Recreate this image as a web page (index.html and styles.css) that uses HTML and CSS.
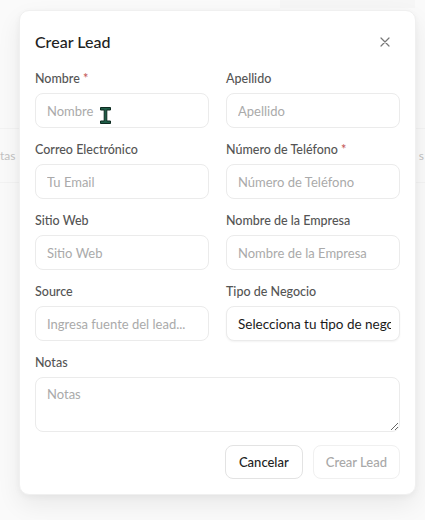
FILE: index.html
```html
<!DOCTYPE html>
<html lang="es">
<head>
<meta charset="utf-8">
<title>Crear Lead</title>
<link rel="stylesheet" href="styles.css">
</head>
<body>
<div class="page">
  <div class="topbar"></div>
  <div class="tabs">
    <span class="tab">tas</span>
    <span class="tab">s</span>
  </div>
</div>
<div class="backdrop"></div>
<div class="modal" role="dialog">
  <div class="modal-header">
    <h2 class="modal-title">Crear Lead</h2>
    <button class="close" aria-label="Cerrar">
      <svg width="10" height="10" viewBox="0 0 10 10"><path d="M1 1L9 9M9 1L1 9" stroke="#777" stroke-width="1.2" fill="none" stroke-linecap="round"/></svg>
    </button>
  </div>
  <form class="form">
    <div class="field">
      <label>Nombre <span class="req">*</span></label>
      <input class="input" placeholder="Nombre">
    </div>
    <div class="field">
      <label>Apellido</label>
      <input class="input" placeholder="Apellido">
    </div>
    <div class="field">
      <label>Correo Electrónico</label>
      <input class="input" placeholder="Tu Email">
    </div>
    <div class="field">
      <label>Número de Teléfono <span class="req">*</span></label>
      <input class="input" placeholder="Número de Teléfono">
    </div>
    <div class="field">
      <label>Sitio Web</label>
      <input class="input" placeholder="Sitio Web">
    </div>
    <div class="field">
      <label>Nombre de la Empresa</label>
      <input class="input" placeholder="Nombre de la Empresa">
    </div>
    <div class="field">
      <label>Source</label>
      <input class="input" placeholder="Ingresa fuente del lead...">
    </div>
    <div class="field">
      <label>Tipo de Negocio</label>
      <div class="input select"><span class="select-text">Selecciona tu tipo de negocio</span></div>
    </div>
    <div class="field full">
      <label>Notas</label>
      <textarea class="input textarea" placeholder="Notas"></textarea>
    </div>
    <div class="actions full">
      <button type="button" class="btn">Cancelar</button>
      <button type="button" class="btn disabled">Crear Lead</button>
    </div>
  </form>
</div>
<svg class="cursor" width="13" height="19" viewBox="0 0 13 19">
  <path d="M1.5 1.5H11.5V4H7.8V15H11.5V17.5H1.5V15H5.2V4H1.5Z" fill="#1e5c46" stroke="#0d2a20" stroke-width="1"/>
</svg>
</body>
</html>
```
FILE: styles.css
```css
* { box-sizing: border-box; }
html, body { margin: 0; height: 100%; }
body {
  width: 425px;
  height: 520px;
  overflow: hidden;
  background: #fafafa;
  font-family: Lato, "Open Sans", sans-serif;
  position: relative;
}
.page { height: 100%; }
.topbar {
  height: 8px;
  background: #f2f2f2;
  margin-left: 280px;
  margin-right: 10px;
}
.tabs {
  margin-top: 120px;
  height: 55px;
  border-top: 1px solid #ececec;
  border-bottom: 1px solid #ececec;
  display: flex;
  justify-content: space-between;
  align-items: center;
  padding: 0 1px 0 0;
}
.tab { font-size: 12px; color: #888; }
.backdrop {
  position: absolute;
  inset: 0;
  background: rgba(250,250,250,0.5);
}
.modal {
  position: absolute;
  left: 19px;
  top: 10px;
  width: 397px;
  height: 485px;
  background: #fff;
  border: 1px solid #f0f0f0;
  border-radius: 10px;
  box-shadow: 0 10px 24px rgba(0,0,0,0.07), 0 2px 6px rgba(0,0,0,0.04);
  padding: 21px 15px 16px 15px;
}
.modal-header {
  display: flex;
  justify-content: space-between;
  align-items: center;
  height: 20px;
}
.modal-title {
  margin: 0;
  font-size: 16px;
  font-weight: 500;
  color: #222;
  line-height: 20px;
}
.close {
  border: 0;
  background: none;
  padding: 0;
  width: 10px;
  height: 10px;
  margin-right: 10px;
  display: flex;
}
.form {
  margin-top: 19px;
  display: grid;
  grid-template-columns: 1fr 1fr;
  column-gap: 17px;
  row-gap: 14px;
}
.field { display: flex; flex-direction: column; gap: 6px; min-width: 0; }
.full { grid-column: 1 / -1; }
label {
  font-size: 12.5px;
  line-height: 16px;
  font-weight: 500;
  color: #555;
}
.req { color: #c25555; }
.input {
  height: 35px;
  width: 100%;
  border: 1px solid #ebebeb;
  border-radius: 8px;
  padding: 0 11px;
  font-family: inherit;
  font-size: 13px;
  color: #222;
  background: #fff;
  outline: none;
}
.input::placeholder { color: #aaa; }
.select {
  display: flex;
  align-items: center;
  padding: 0 8px 0 11px;
  box-shadow: 0 1px 2px rgba(0,0,0,0.05);
}
.select-text {
  display: block;
  white-space: nowrap;
  overflow: hidden;
  font-size: 13.5px;
  color: #1a1a1a;
}
.textarea {
  height: 55px;
  padding: 8px 11px;
  resize: vertical;
  display: block;
}
.actions {
  display: flex;
  justify-content: flex-end;
  gap: 10px;
  margin-top: -1px;
}
.btn {
  height: 34px;
  padding: 0 13px;
  border: 1px solid #e3e3e3;
  border-radius: 8px;
  background: #fff;
  font-family: inherit;
  font-size: 13px;
  font-weight: 500;
  color: #222;
}
.btn.disabled { color: #a8a8a8; border-color: #f0f0f0; padding: 0 12px; }
.cursor {
  position: absolute;
  left: 99px;
  top: 106px;
}
```
